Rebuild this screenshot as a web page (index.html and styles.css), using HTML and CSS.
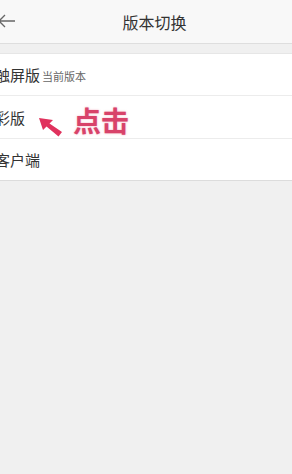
FILE: index.html
```html
<!DOCTYPE html>
<html lang="zh-CN">
<head>
  <meta charset="UTF-8">
  <meta name="viewport" content="width=device-width, initial-scale=1.0">
  <title>版本切换</title>
  <link rel="stylesheet" href="styles.css">
</head>
<body>
  <div class="header">
    <svg class="back" width="18" height="14" viewBox="0 0 18 14">
      <path d="M7 1 L1 7 L7 13 M1 7 L17 7" fill="none" stroke="#666" stroke-width="1.3"/>
    </svg>
    <div class="title">版本切换</div>
  </div>
  <ul class="list">
    <li class="item">触屏版<span class="note">当前版本</span></li>
    <li class="item item-tall">彩版
      <svg class="arrow" width="24" height="19" viewBox="0 0 24 19">
        <path d="M0 0 L14 2 L10.5 5.5 L23 14 L19.5 18.5 L7.5 8.5 L4 12 Z" fill="#e0325d"/>
      </svg>
      <span class="tap">点击</span>
    </li>
    <li class="item">客户端</li>
  </ul>
</body>
</html>
```

FILE: styles.css
```css
body {
  margin: 0;
  background: #f0f0f0;
  font-family: "Noto Sans CJK SC", "Noto Sans", sans-serif;
  color: #333;
}
.header {
  height: 43px;
  background: #f8f8f8;
  border-bottom: 1px solid #dedede;
  display: flex;
  align-items: center;
  position: relative;
}
.back {
  position: absolute;
  left: -2px;
  top: 14px;
}
.title {
  flex: 1;
  text-align: center;
  font-size: 16px;
  color: #333;
  padding-left: 17px;
}
.list {
  list-style: none;
  margin: 9px 0 0 -5px;
  padding: 0;
  background: #fff;
  border-top: 1px solid #e6e6e6;
  border-bottom: 1px solid #dcdcdc;
}
.item {
  height: 41px;
  display: flex;
  align-items: center;
  font-size: 15px;
  border-top: 1px solid #ececec;
}
.item:first-child {
  border-top: none;
}
.item-tall {
  height: 42px;
}
.note {
  font-size: 11px;
  color: #666;
  margin-left: 2px;
  margin-top: 2px;
}
.arrow {
  margin-left: 14px;
  margin-top: 20px;
}
.tap {
  font-size: 28px;
  font-weight: bold;
  color: #d8436a;
  margin-left: 10px;
  margin-top: 6px;
  text-shadow: 0 0 2px rgba(230, 80, 120, 0.5);
}
```
